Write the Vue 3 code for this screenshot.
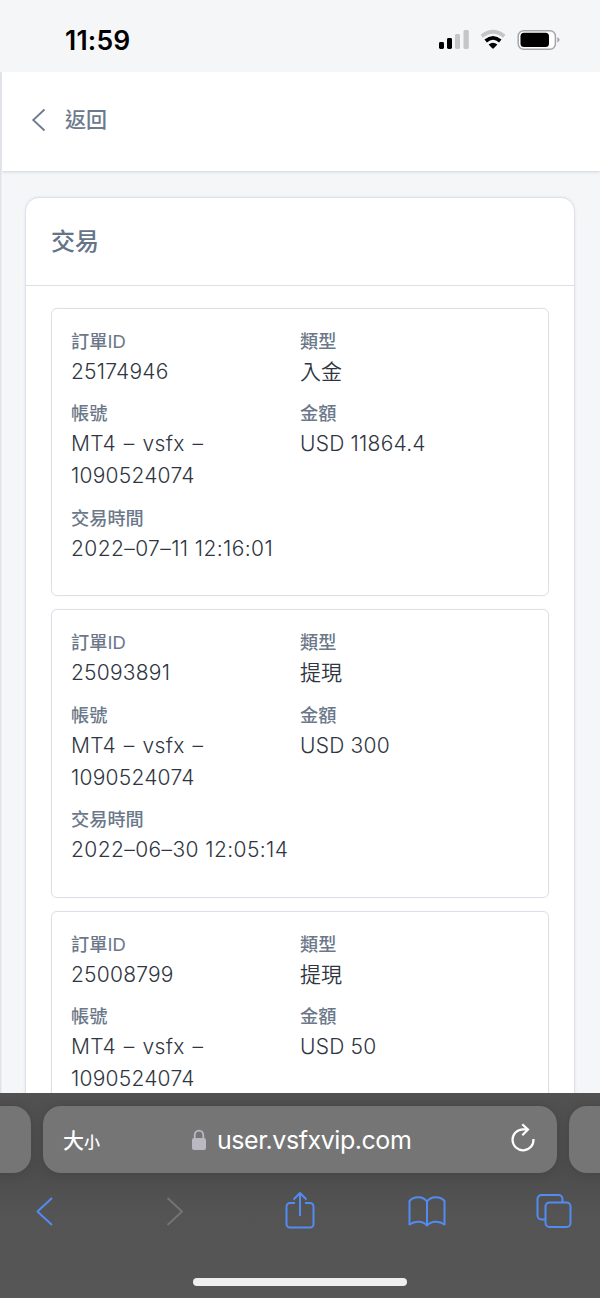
<script setup>
const records = [
  { id: '25174946', type: '入金', amount: 'USD 11864.4', time: '2022–07–11 12:16:01' },
  { id: '25093891', type: '提現', amount: 'USD 300', time: '2022–06–30 12:05:14' },
  { id: '25008799', type: '提現', amount: 'USD 50', time: '' },
]
</script>

<template>
  <div class="phone">
    <div class="status">
      <span class="clock">11:59</span>
      <svg class="signals" width="124" height="24" viewBox="0 0 124 24">
        <rect x="1" y="14" width="5" height="7" rx="1.4" />
        <rect x="9" y="10" width="5" height="11" rx="1.4" />
        <g fill="#c5c6c8">
          <rect x="17" y="6" width="5" height="15" rx="1.4" />
          <rect x="25.500" y="2" width="5.300" height="19" rx="1.400" />
        </g>
        <g fill="none" stroke-width="3.800">
          <path d="M43.700 8.300Q55 -.8 66.300 8.300" stroke="#c5c6c8" />
          <path d="M47.700 13Q55 6.800 62.300 13" stroke="#000" />
        </g>
        <path d="M50.600 16.400Q55 12.900 59.400 16.400L55.800 20.300Q55 21.100 54.200 20.300Z" />
        <rect x="80.200" y="2.700" width="37.200" height="18.600" rx="5.500" fill="#fff" stroke="#a4a5a7" stroke-width="1.500" />
        <rect x="82.500" y="4.800" width="28.500" height="14.300" rx="3.500" />
        <path d="M119.300 9.300Q121.600 10.200 121.600 11.800Q121.600 13.400 119.300 14.400Z" fill="#a4a5a7" />
      </svg>
    </div>

    <main class="page">
      <header class="back">
        <svg width="15" height="24" viewBox="0 0 15 24"><path d="M13.500 1.500L2.200 12L13.500 22.500" /></svg>
        <span>返回</span>
      </header>
      <section class="card">
        <h1>交易</h1>
        <div class="list">
          <article v-for="r in records" :key="r.id" class="record">
            <div class="field"><label>訂單ID</label><p>{{ r.id }}</p></div>
            <div class="field"><label>類型</label><p class="han">{{ r.type }}</p></div>
            <div class="field"><label>帳號</label><p><span class="account">MT4 – vsfx –</span><br />1090524074</p></div>
            <div class="field"><label>金額</label><p class="amount">{{ r.amount }}</p></div>
            <div v-if="r.time" class="field wide"><label>交易時間</label><p class="time">{{ r.time }}</p></div>
          </article>
        </div>
      </section>
    </main>

    <footer class="browser">
      <div class="tabs">
        <div class="tab side"></div>
        <div class="tab address">
          <span class="size">大<small>小</small></span>
          <div class="site">
            <svg width="16" height="22" viewBox="0 0 16 22">
              <rect x="1" y="9" width="14" height="12" rx="2" fill="#bab8c1" />
              <path d="M3.700 10V6.300a4.300 4.700 0 0 1 8.600 0V10" fill="none" stroke="#bab8c1" stroke-width="1.800" />
            </svg>
            <span>user.vsfxvip.com</span>
          </div>
          <svg class="reload" width="26" height="30" viewBox="0 0 26 30">
            <path d="M16.500 6.300H13A10.500 10.500 0 1 0 23.500 16" />
            <path d="M12.300 1.200L18 6.600L12.300 12.300" />
          </svg>
        </div>
        <div class="tab side"></div>
      </div>
      <nav class="tools">
        <svg class="prev" width="20" height="40" viewBox="0 0 20 40"><path d="M17 7L2.500 20.500L17 34" /></svg>
        <svg class="off" width="20" height="40" viewBox="0 0 20 40"><path d="M2.500 7L17 20.500L2.500 34" /></svg>
        <svg width="32" height="40" viewBox="0 0 32 40"><path d="M11 12H6a3.500 3.500 0 0 0-3.500 3.500V33A3.500 3.500 0 0 0 6 36.500H26A3.500 3.500 0 0 0 29.500 33V15.500A3.500 3.500 0 0 0 26 12H21M16 25V2M9.500 8.500L16 2L22.500 8.500" /></svg>
        <svg width="38" height="40" viewBox="0 0 38 40"><path d="M19 34.500C15 30 7 29.500 1.500 33.500V10C6 5 15 5 19 10.500C23 5 32 5 36.500 10V33.500C31 29.500 23 30 19 34.500V10.500" /></svg>
        <svg width="36" height="40" viewBox="0 0 36 40"><path d="M9 28.500H5.500A4 4 0 0 1 1.500 24.500V8A4 4 0 0 1 5.500 4H22.500A4 4 0 0 1 26.500 8V11.500" /><rect x="9.500" y="11.500" width="25" height="24.500" rx="4" /></svg>
      </nav>
      <div class="home"></div>
    </footer>
  </div>
</template>

<style>
body { margin: 0; background: #f5f6f8; }
</style>

<style scoped>
.phone { width: 600px; height: 1298px; overflow: hidden; display: flex; flex-direction: column; background: #f5f6f8; font-family: Inter, "Noto Sans CJK TC", sans-serif; }
.status { height: 72px; flex: none; display: flex; align-items: flex-start; justify-content: space-between; padding: 0 38px 0 65px; box-sizing: border-box; }
.clock { margin-top: 22px; font-size: 26.500px; line-height: 36px; font-weight: 600; letter-spacing: .2px; color: #000; }
.signals { margin-top: 28px; }
.page { flex: none; height: 1021px; overflow: hidden; box-sizing: border-box; border-left: 1px solid #dfe2e9; box-shadow: inset 1px 0 #eceef3; }
.back { height: 99px; margin-left: 1px; padding-left: 29px; display: flex; align-items: center; gap: 19px; box-sizing: border-box; padding-bottom: 3px; background: #fff; box-shadow: 0 1px 3px #cfd4de; color: #6c7a8b; font: 500 21px/30px "Noto Sans CJK TC", sans-serif; }
.back span { margin-top: -4px; }
.back svg { fill: none; stroke: #6c7a8b; stroke-width: 1.800; }
.card { width: 550px; height: 1000px; margin: 26px 0 0 24px; box-sizing: border-box; background: #fff; border: 1px solid #dfe2e9; border-radius: 14px; box-shadow: 0 0 3px #dfe3eb; }
h1 { height: 88px; box-sizing: border-box; margin: 0; padding: 0 25px; border-bottom: 1px solid #dbdfe6; color: #657487; font: 500 24px/83px "Noto Sans CJK TC", sans-serif; }
.list { display: flex; flex-direction: column; gap: 13px; padding: 21.700px 25px; }
.record { display: grid; grid-template-columns: 1fr 1fr; row-gap: 12px; align-content: start; flex: none; height: 288.500px; padding: 19.200px 19px 18px; box-sizing: border-box; border: 1px solid #dde0e7; border-radius: 6px; box-shadow: 0 0 1px #dfe2e8; }
.field.wide { grid-column: span 2; }
label { display: block; height: 28px; font: 500 18.200px/28px "Liberation Sans", "Noto Sans CJK TC", sans-serif; color: #6c7889; }
p { margin: 0; font-size: 21px; line-height: 32.300px; font-weight: 300; letter-spacing: .22px; color: #2f3641; white-space: nowrap; }
.account { letter-spacing: .3px; word-spacing: 1.700px; }
.time { letter-spacing: .4px; }
p.han { margin-top: -2px; letter-spacing: 0; font-weight: 350; font-family: "Noto Sans CJK TC", sans-serif; }
.browser { flex: none; height: 205px; background: linear-gradient(#515151, #4d4d4d 80px, #545454 120px, #565656); color: #fff; }
.tabs { display: flex; justify-content: center; gap: 12px; padding-top: 13px; }
.tab { height: 67px; flex: none; border-radius: 18px; background: #757575; box-shadow: 0 1px 8px #444; }
.side { width: 80px; }
.address { width: 514px; box-sizing: border-box; display: flex; align-items: center; padding: 0 21px 0 20px; }
.size { width: 128px; font: 500 21px/30px "Noto Sans CJK TC", sans-serif; }
.size small { font-size: 16px; }
.site { display: flex; align-items: center; gap: 10px; font-size: 25px; line-height: 32px; letter-spacing: -.45px; white-space: nowrap; }
.reload { fill: none; stroke: #fff; stroke-width: 2.200; margin: -3px 0 0 auto; }
.tools { display: grid; grid-template-columns: repeat(5, 1fr); justify-items: center; height: 40px; margin: 18px -18px 0; }
.tools svg { fill: none; stroke: #528cf2; stroke-width: 2; stroke-linejoin: round; }
.tools .prev { margin-right: 2px; }
.tools .off { stroke: #747474; margin-left: 4px; }
.home { width: 214px; height: 8px; border-radius: 4px; background: #efefef; margin: 47px auto 0; }
</style>
